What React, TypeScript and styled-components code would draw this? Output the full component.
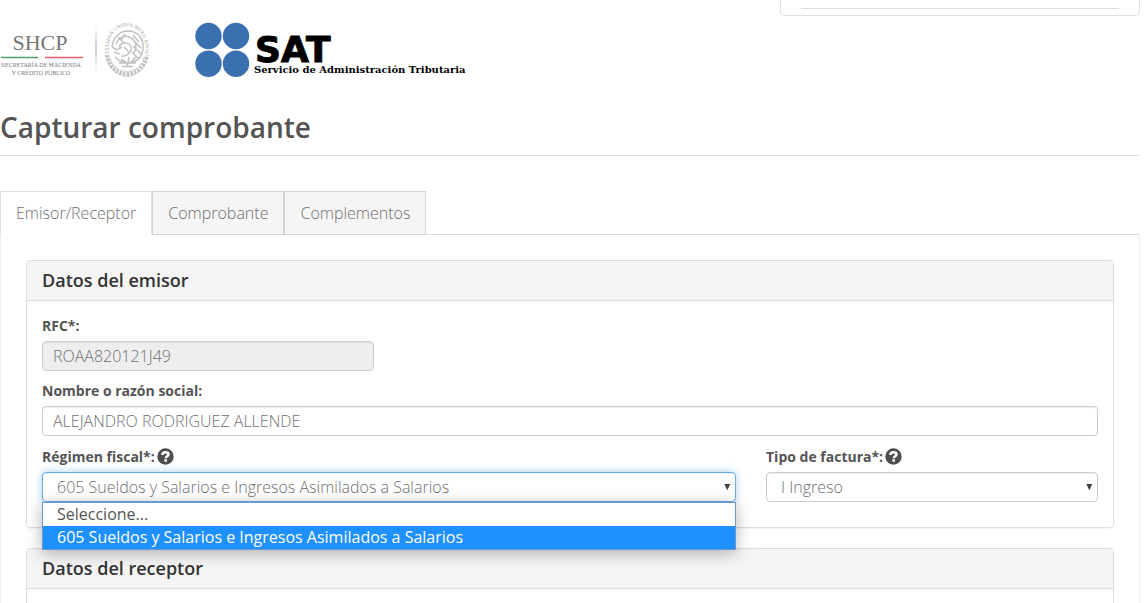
import React from "react";
import styled, { createGlobalStyle, css } from "styled-components";

const GlobalStyle = createGlobalStyle`
  *, *::before, *::after { box-sizing: border-box; }
  body {
    margin: 0;
    background: #fff;
    color: #545454;
    font-family: "Open Sans", "Noto Sans", sans-serif;
    font-size: 16px;
    font-weight: 300;
    line-height: 22px;
  }
`;

const Page = styled.div`
  padding-right: 4px;
`;

const Header = styled.header`
  display: flex;
  justify-content: space-between;
  align-items: flex-start;
`;

const Logos = styled.div`
  display: flex;
  gap: 44px;
  padding-top: 20px;
`;

const UserBox = styled.aside`
  width: 360px;
  height: 16px;
  padding: 8px 20px 0;
  border: 1px solid #dce0e0;
  border-top: 0;
  border-radius: 0 0 5px 5px;
`;

const Divider = styled.hr`
  margin: 0;
  border: 0;
  border-top: 1px solid #ddd;
`;

const Title = styled.h1`
  margin: 28px 0 35px;
  padding-bottom: 9px;
  border-bottom: 1px solid #ddd;
  font-size: 28px;
  font-weight: 600;
  line-height: 38px;
`;

const Tabs = styled.div`
  display: flex;
  border-bottom: 1px solid #ddd;
`;

const Tab = styled.button<{ $active?: boolean }>`
  height: 44px;
  margin-bottom: -1px;
  padding: 0 15px;
  border: 1px solid #d3d3d3;
  background: #f5f5f5;
  color: #6f6f6f;
  font: inherit;
  ${(p) =>
    p.$active &&
    css`
      border-color: #ddd;
      border-bottom-color: #fff;
      background: #fff;
    `}
`;

const TabPanel = styled.main`
  padding: 25px;
  border: 1px solid #eee;
  border-top: 0;
`;

const Card = styled.section`
  margin-bottom: 20px;
  border: 1px solid #ddd;
  border-radius: 4px;
  box-shadow: 0 1px 1px rgba(0, 0, 0, 0.05);
`;

const CardTitle = styled.h2`
  margin: 0;
  padding: 9px 15px 10px;
  border-bottom: 1px solid #ddd;
  border-radius: 3px 3px 0 0;
  background: #f4f4f4;
  color: #333;
  font-size: 18px;
  font-weight: 600;
  line-height: 20px;
`;

const CardBody = styled.div`
  padding: 15px;
`;

const Row = styled.div`
  display: grid;
  grid-template-columns: repeat(3, minmax(0, 1fr));
  column-gap: 30px;
`;

const Field = styled.div<{ $span?: number }>`
  grid-column: span ${(p) => p.$span ?? 1};
  margin-bottom: 10px;
`;

const LabelRow = styled.div`
  display: flex;
  align-items: center;
  gap: 2px;
  margin-bottom: 5px;
`;

const Label = styled.label`
  font-size: 14px;
  font-weight: 700;
  line-height: 20px;
`;

const HelpButton = styled.button`
  display: flex;
  padding: 2px 0;
  border: 0;
  background: none;
  color: #4d4d4d;
`;

const control = css`
  display: block;
  width: 100%;
  height: 30px;
  border: 1px solid #ccc;
  border-radius: 4px;
  background: #fff;
  box-shadow: inset 0 1px 1px rgba(0, 0, 0, 0.075);
  color: #6f6f6f;
  font: inherit;
  outline: 0;
`;

const Input = styled.input`
  ${control}
  padding: 0 10px;
  &:disabled { background: #eee; }
`;

const SelectWrap = styled.div`
  position: relative;
`;

const Select = styled.select<{ $open?: boolean }>`
  ${control}
  appearance: none;
  padding: 0 20px 0 14px;
  ${(p) =>
    p.$open &&
    css`
      border-color: #66afe9;
      box-shadow: inset 0 1px 1px rgba(0, 0, 0, 0.075), 0 0 8px rgba(102, 175, 233, 0.6);
    `}
`;

const Arrow = styled.svg`
  position: absolute;
  top: 12px;
  right: 5px;
  pointer-events: none;
`;

const Menu = styled.ul`
  position: absolute;
  z-index: 1;
  top: 100%;
  left: 0;
  right: 0;
  margin: 0;
  padding: 0;
  border: 1px solid #6e97d0;
  background: #fff;
  box-shadow: 0 3px 16px rgba(0, 0, 0, 0.3);
  font-weight: 400;
  list-style: none;
`;

const Option = styled.li<{ $selected?: boolean }>`
  padding: 0 14px;
  line-height: 23px;
  background: ${(p) => (p.$selected ? "#1e90ff" : "#fff")};
  color: ${(p) => (p.$selected ? "#fff" : "#545454")};
`;

const ShcpLogo = () => (
  <svg width="151" height="60" viewBox="0 20 151 60" role="img" aria-label="SHCP">
    <defs>
      <linearGradient id="bar" x1="0" y1="0" x2="0" y2="1">
        <stop offset="0" stopColor="#fff" />
        <stop offset="0.5" stopColor="#ccc" />
        <stop offset="1" stopColor="#fff" />
      </linearGradient>
      <path id="arc" d="M109.500 56A18.500 22.500 0 1 1 144.500 56" />
    </defs>
    <g fill="#777" fontFamily="Liberation Serif, serif" textAnchor="middle">
      <text x="40" y="50" fontSize="22">SHCP</text>
      <text x="41" y="67">
        <tspan fontSize="7">S</tspan><tspan fontSize="6">ECRETARÍA DE </tspan>
        <tspan fontSize="7">H</tspan><tspan fontSize="6">ACIENDA</tspan>
      </text>
      <text x="41" y="75" fontSize="6">Y CRÉDITO PÚBLICO</text>
    </g>
    <path d="M1 57.500H38" stroke="#4fa06a" strokeWidth="1.300" />
    <path d="M45 57.500H83" stroke="#e0606a" strokeWidth="1.300" />
    <rect x="95" y="26" width="2" height="46" fill="url(#bar)" />
    <g fill="none" stroke="#c2c2c2">
      <path d="M107 55C109 67 117 73.500 127 74C137 73.500 145 67 147 55" strokeWidth="4" strokeDasharray="2.500 1.200" />
      <path d="M106.500 56C108 69 117 76 127 76.500C137 76 146 69 147.500 56" strokeWidth="0.700" />
      <path d="M110 57C112 66 119 71 127 71.500C135 71 142 66 144 57" strokeWidth="0.700" />
      <path d="M112 47C113 37 120 31 128 31C138 31 144 39 143 49C142 57 137 62 130 62M116 44C119 37 126 34 131 38C137 41 137 49 133 54M119 47C123 41 129 42 131 47C132 52 127 57 121 56M112 47L117 50L122 47M114 52L120 54M115 57C121 64 132 65 140 58M119 63H136M122 66.500H133M133 35L139 42M134 41L141 48M133 46L141 54M132 52L138 58M125 34L121 40M129 57L127 67M118 37L124 43M137 56L131 62M124 47L129 52M121 59L126 62" strokeWidth="1.500" />
    </g>
    <text fill="#a0a0a0" fontFamily="Liberation Serif, serif" fontSize="5">
      <textPath href="#arc" startOffset="50%" textAnchor="middle">ESTADOS UNIDOS MEXICANOS</textPath>
    </text>
  </svg>
);

const SatLogo = () => (
  <svg width="290" height="60" viewBox="195 20 290 60" role="img" aria-label="SAT">
    <g fill="#3a70b0">
      <circle cx="208.500" cy="36" r="13.200" />
      <circle cx="236" cy="36" r="13.200" />
      <circle cx="208.500" cy="63.700" r="13.200" />
      <circle cx="236" cy="63.700" r="13.200" />
    </g>
    <text x="255" y="62" fontFamily="DejaVu Sans, sans-serif" fontWeight="700" fontSize="36" stroke="#000" strokeWidth="1">SAT</text>
    <text x="254" y="73" fontFamily="DejaVu Serif, serif" fontWeight="700" fontSize="10">Servicio de Administración Tributaria</text>
  </svg>
);

const Help = ({ label }: { label: string }) => (
  <HelpButton type="button" aria-label={label}>
    <svg width="17" height="17" viewBox="0 0 17 17" aria-hidden="true">
      <circle cx="8.500" cy="8.500" r="8.200" fill="currentColor" />
      <path d="M5.400 6.900C5.400 4.900 6.700 4.200 8.500 4.200C10.500 4.200 11.500 5.200 11.500 6.400C11.500 8.200 8.700 8.200 8.700 10.300" fill="none" stroke="#fff" strokeWidth="2.500" />
      <rect x="7.400" y="11.300" width="2.600" height="2.400" fill="#fff" />
    </svg>
  </HelpButton>
);

const Caret = () => (
  <Arrow width="7" height="7" viewBox="0 0 7 7" aria-hidden="true">
    <path d="M0.300 0H6.300L3.300 6.300Z" fill="#444" />
  </Arrow>
);

const regimenes = ["Seleccione...", "605 Sueldos y Salarios e Ingresos Asimilados a Salarios"];

export default function App() {
  return (
    <Page>
      <GlobalStyle />
      <Header>
        <Logos>
          <ShcpLogo />
          <SatLogo />
        </Logos>
        <UserBox>
          <Divider />
        </UserBox>
      </Header>
      <Title>Capturar comprobante</Title>
      <Tabs role="tablist">
        <Tab type="button" role="tab" aria-selected="true" $active>Emisor/Receptor</Tab>
        <Tab type="button" role="tab" aria-selected="false">Comprobante</Tab>
        <Tab type="button" role="tab" aria-selected="false">Complementos</Tab>
      </Tabs>
      <TabPanel>
        <Card>
          <CardTitle>Datos del emisor</CardTitle>
          <CardBody>
            <Row>
              <Field>
                <LabelRow><Label htmlFor="rfc">RFC*:</Label></LabelRow>
                <Input id="rfc" defaultValue="ROAA820121J49" disabled />
              </Field>
            </Row>
            <Row>
              <Field $span={3}>
                <LabelRow><Label htmlFor="nombre">Nombre o razón social:</Label></LabelRow>
                <Input id="nombre" defaultValue="ALEJANDRO RODRIGUEZ ALLENDE" />
              </Field>
            </Row>
            <Row>
              <Field $span={2}>
                <LabelRow>
                  <Label htmlFor="regimen">Régimen fiscal*:</Label>
                  <Help label="Ayuda: régimen fiscal" />
                </LabelRow>
                <SelectWrap>
                  <Select id="regimen" defaultValue={regimenes[1]} $open>
                    {regimenes.map((r) => <option key={r}>{r}</option>)}
                  </Select>
                  <Caret />
                  <Menu role="listbox" aria-label="Régimen fiscal">
                    {regimenes.map((r, i) => (
                      <Option key={r} role="option" aria-selected={i === 1} $selected={i === 1}>{r}</Option>
                    ))}
                  </Menu>
                </SelectWrap>
              </Field>
              <Field>
                <LabelRow>
                  <Label htmlFor="tipo">Tipo de factura*:</Label>
                  <Help label="Ayuda: tipo de factura" />
                </LabelRow>
                <SelectWrap>
                  <Select id="tipo">
                    <option>I Ingreso</option>
                  </Select>
                  <Caret />
                </SelectWrap>
              </Field>
            </Row>
          </CardBody>
        </Card>
        <Card>
          <CardTitle>Datos del receptor</CardTitle>
          <CardBody />
        </Card>
      </TabPanel>
    </Page>
  );
}
